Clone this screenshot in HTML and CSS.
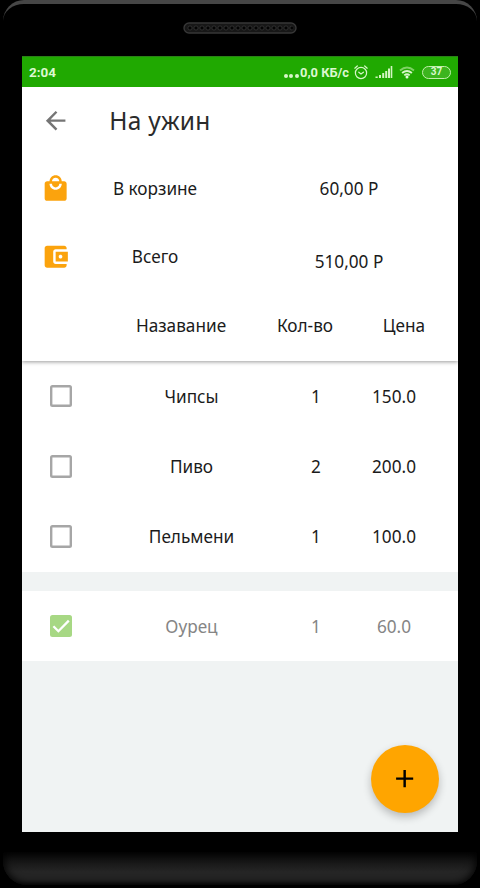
FILE: index.html
```html
<!DOCTYPE html>
<html lang="ru">
<head>
<meta charset="utf-8">
<title>На ужин</title>
<link rel="stylesheet" href="styles.css">
</head>
<body>
<div class="phone">
  <div class="bezel-top">
    <svg class="speaker" width="114" height="12" viewBox="0 0 114 12">
      <defs><pattern id="mesh" width="6" height="6" patternUnits="userSpaceOnUse" x="4" y="3"><circle cx="3" cy="3" r="2.1" fill="#030303" stroke="#333" stroke-width=".8"/></pattern></defs>
      <rect x="1" y="1" width="112" height="10" rx="5" fill="#171717" stroke="#373737" stroke-width="1.4"/>
      <rect x="4" y="3" width="106" height="6" rx="3" fill="url(#mesh)"/>
    </svg>
  </div>
  <main class="screen">
    <div class="status">
      <span class="time">2:04</span>
      <span class="dots"><i></i><i></i><i></i></span>
      <span class="speed">0,0 КБ/с</span>
      <svg class="alarm" width="14" height="15" viewBox="0 0 14 15" fill="none" stroke="#d8f6c9" stroke-width="1.2" stroke-linecap="round"><circle cx="7" cy="8" r="5.6"/><path d="M.8 3.2 3.3 1M13.2 3.2 10.7 1M4.8 7.2 7 9l2.4-1.8"/></svg>
      <svg class="signal" width="18" height="13" viewBox="0 0 18 13" fill="#d3f5c1"><path d="M.5 10.5h2.2V12H.5zM4 9h2v3H4zM7.2 7h2v5h-2zM10.2 5h2v7h-2zM13 2.5h2V12h-2zM15.7 0h1.6v12h-1.6z"/></svg>
      <svg class="wifi" width="16" height="13" viewBox="0 0 16 13" fill="none" stroke-width="1.9"><path stroke="#7fd166" d="M1 4.4Q8-1.4 15 4.4"/><path stroke="#d8f6c9" d="M3.1 7Q8 2.8 12.9 7M5.3 9.4Q8 7 10.7 9.4"/><circle cx="8" cy="11" r="1.5" fill="#e6fbdc"/></svg>
      <span class="battery">37</span>
    </div>
    <header class="summary">
      <div class="toolbar">
        <svg class="icon" viewBox="0 0 24 24" fill="#757575"><path d="M20 11H7.83l5.59-5.59L12 4l-8 8 8 8 1.41-1.41L7.83 13H20v-2z"/></svg>
        <h1>На ужин</h1>
      </div>
      <div class="total">
        <svg class="icon" viewBox="0 0 24 24" fill="#fba30d"><path d="M19 6h-2c0-2.76-2.24-5-5-5S7 3.24 7 6H5c-1.1 0-1.99.9-1.99 2L3 20c0 1.1.9 2 2 2h14c1.1 0 2-.9 2-2V8c0-1.1-.9-2-2-2zm-7-3c1.66 0 3 1.34 3 3H9c0-1.66 1.34-3 3-3zm0 10c-2.76 0-5-2.24-5-5h2c0 1.66 1.34 3 3 3s3-1.34 3-3h2c0 2.76-2.24 5-5 5z"/></svg>
        <span>В корзине</span><span>60,00 Р</span>
      </div>
      <div class="total">
        <svg class="icon" viewBox="0 0 24 24" fill="#fba30d"><path d="M21 18v1c0 1.1-.9 2-2 2H5c-1.11 0-2-.9-2-2V5c0-1.1.89-2 2-2h14c1.1 0 2 .9 2 2v1h-9c-1.11 0-2 .9-2 2v8c0 1.1.89 2 2 2h9zm-9-2h10V8H12v8zm4-2.5c-.83 0-1.5-.67-1.5-1.5s.67-1.5 1.5-1.5 1.5.67 1.5 1.5-.67 1.5-1.5 1.5z"/></svg>
        <span>Всего</span><span class="sum">510,00 Р</span>
      </div>
      <div class="heads"><span>Назавание</span><span>Кол-во</span><span>Цена</span></div>
    </header>
    <section class="list">
      <div class="row"><i class="box"></i><span>Чипсы</span><span>1</span><span>150.0</span></div>
      <div class="row"><i class="box"></i><span>Пиво</span><span>2</span><span>200.0</span></div>
      <div class="row"><i class="box"></i><span>Пельмени</span><span>1</span><span>100.0</span></div>
    </section>
    <section class="list bought">
      <div class="row"><i class="box checked"><svg width="22" height="22" viewBox="0 0 22 22" fill="none" stroke="#fff" stroke-width="2.3"><path d="m3.4 11.2 5 5L18.8 5.6"/></svg></i><span>Оурец</span><span>1</span><span>60.0</span></div>
    </section>
    <div class="footer"><button class="fab" aria-label="Добавить"><svg class="icon" viewBox="0 0 24 24"><path d="M19 13h-6v6h-2v-6H5v-2h6V5h2v6h6v2z"/></svg></button></div>
  </main>
  <div class="bezel-bottom"><div class="chin"></div></div>
</div>
</body>
</html>
```
FILE: styles.css
```css
* { box-sizing: border-box; }
body { margin: 0; background: #000; font-family: "Noto Sans", sans-serif; color: #1b1b1b; }
.phone { width: 480px; height: 888px; display: flex; flex-direction: column; align-items: center; background: #000; overflow: hidden; }
.bezel-top { width: 474px; height: 56px; flex: none; border-top: 4px solid #464646; border-radius: 21px 21px 0 0; display: flex; justify-content: center; padding-top: 18px; background: #000; }
.speaker { display: block; }
.screen { width: 436px; height: 776px; flex: none; background: #f0f3f3; display: flex; flex-direction: column; }
.status { height: 31px; flex: none; background: #20a901; border-top: 1px solid #2b8117; display: flex; align-items: center; padding: 0 7px 0; color: #dcf8cf; font: 700 13px Roboto, sans-serif; }
.time { margin-right: auto; font-size: 13.5px; }
.dots { display: flex; gap: 1.6px; margin: 7px 1px 0 0; }
.dots i { width: 4px; height: 4px; border-radius: 50%; background: #d8f6c9; }
.speed { font-weight: 700; font-size: 12.9px; width: 51px; white-space: nowrap; }
.alarm { margin-left: 3px; }
.signal { margin-left: 7px; }
.wifi { margin-left: 6px; }
.battery { width: 29px; height: 13px; margin-left: 7px; border: 1.5px solid #c3efad; border-radius: 7px; background: #3cb51e; display: flex; align-items: center; justify-content: center; font-size: 10px; line-height: 10px; }
.summary { height: 274px; flex: none; background: #fff; box-shadow: 0 1px 4px rgba(0,0,0,.4); clip-path: inset(0 0 -8px 0); position: relative; font-size: 17.2px; }
.icon { width: 29.3px; height: 29.3px; display: block; flex: none; }
.toolbar { height: 68px; display: flex; align-items: center; padding-left: 19px; }
h1 { margin: 0 0 0 39px; font-size: 24.5px; font-weight: 400; line-height: 34px; letter-spacing: .25px; color: #2b2b2b; }
.total { height: 68px; display: grid; grid-template-columns: 48px 170px 218px; align-items: center; text-align: center; }
.total span, .heads span { margin-top: -1px; }
.total .icon { margin-left: 19px; }
.total .sum { margin-top: 9px; }
.heads { height: 70px; display: grid; grid-template-columns: 80px 158px 90px 108px; align-items: center; text-align: center; }
.heads span:first-child { grid-column: 2; }
.list { background: #fff; font-size: 17.2px; }
.row { height: 70.2px; display: grid; grid-template-columns: 88px 163px 86px 70px; align-items: center; text-align: center; }
.box { width: 22.5px; height: 22.5px; margin-left: 27.5px; border-radius: 2.5px; box-shadow: inset 0 0 0 2.4px #a6a6a6; }
.bought { margin-top: 19.4px; color: #858585; }
.checked { background: #a7d884; box-shadow: none; }
.checked svg { display: block; }
.footer { flex: 1; display: flex; justify-content: flex-end; align-items: flex-end; padding: 0 19px 19px 0; }
.fab { width: 68px; height: 68px; padding: 0; border: 0; border-radius: 50%; background: #ffa500; display: flex; align-items: center; justify-content: center; box-shadow: 0 4px 8px rgba(0,0,0,.24); }
.fab .icon { fill: #000; }
.bezel-bottom { width: 100%; height: 56px; padding: 20px 3px 3px; }
.chin { height: 33px; border-radius: 3px 3px 24px 24px; background: linear-gradient(#080808, #252525 60%, #252525 88%, #151515); box-shadow: inset 0 0 8px 1px #000; }
```
